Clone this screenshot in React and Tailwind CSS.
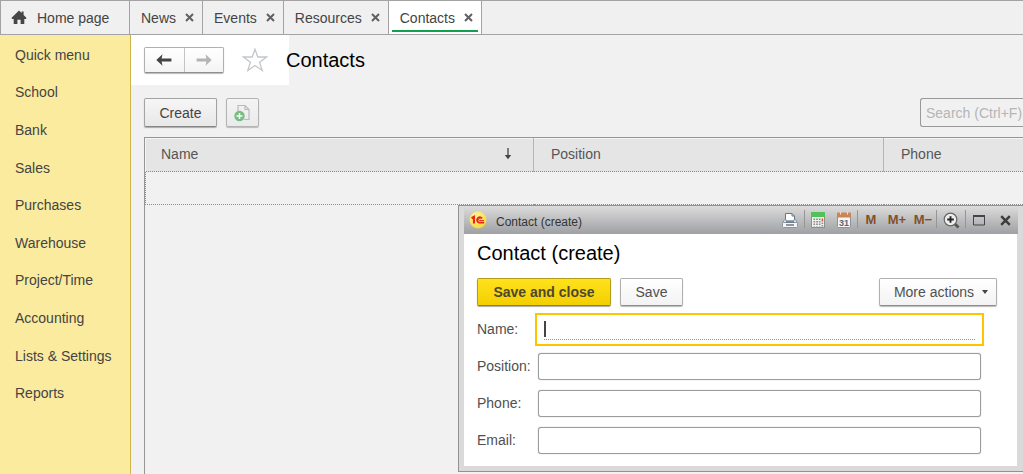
import { useState } from "react";

const tabs = ["News", "Events", "Resources", "Contacts"];

const menuItems = [
  "Quick menu",
  "School",
  "Bank",
  "Sales",
  "Purchases",
  "Warehouse",
  "Project/Time",
  "Accounting",
  "Lists & Settings",
  "Reports",
];

const CrossIcon = ({ size = 9, color = "#606060" }) => (
  <svg width={size} height={size} viewBox="0 0 9 9" fill="none">
    <path d="M1 1L8 8M8 1L1 8" stroke={color} strokeWidth="2" />
  </svg>
);

const HomeIcon = () => (
  <svg width="16" height="15" viewBox="0 0 16 15" fill="#464646">
    <path d="M8 0.5L10.6 3V1.6H12.6V5L15.6 8L14.7 9H13.3V14H9.6V9.8H6.4V14H2.7V9H1.3L0.4 8Z" />
  </svg>
);

const ArrowIcon = ({ color, flip }) => (
  <svg
    width="16"
    height="12"
    viewBox="0 0 16 12"
    className={flip ? "rotate-180" : ""}
  >
    <path d="M0.3 6L6.5 0.3L5.6 4.5H15.4V7.5H5.6L6.5 11.7Z" fill={color} />
  </svg>
);

const StarIcon = () => (
  <svg width="26" height="24" viewBox="0 0 26 24" fill="#fff">
    <path
      d="M13 1.2L15.8 9H24.6L17.6 14.2L20.2 22.5L13 17.5L5.8 22.5L8.4 14.2L1.4 9H10.2Z"
      stroke="#c2c7cd"
      strokeWidth="1.3"
    />
  </svg>
);

const AddDocIcon = () => (
  <svg width="18" height="18" viewBox="0 0 18 18" fill="none">
    <path
      d="M4 8V1.5H11L15 5.5V15.5H10M11 1.5V5.5H15"
      stroke="#b3bcc4"
      strokeWidth="1.2"
    />
    <circle cx="5.5" cy="12" r="5.2" fill="#76bd80" />
    <path d="M5.5 9V15M2.5 12H8.5" stroke="#fff" strokeWidth="1.5" />
  </svg>
);

const LogoIcon = () => (
  <svg width="18" height="18" viewBox="0 0 18 18" className="shrink-0">
    <defs>
      <radialGradient id="logo" cx="0.4" cy="0.3" r="0.7">
        <stop offset="0" stopColor="#fff9a0" />
        <stop offset="1" stopColor="#fbd83a" />
      </radialGradient>
    </defs>
    <circle cx="9" cy="9" r="8.5" fill="url(#logo)" />
    <path d="M2.6 7.2L5 5.8V12.4" stroke="#e8281a" strokeWidth="2.2" fill="none" />
    <path
      d="M13 7.4A2.7 2.7 0 1 0 10.4 11.6H15.2"
      stroke="#e8281a"
      strokeWidth="1.8"
      fill="none"
    />
    <path d="M11.4 8.3A1 1 0 1 0 10.6 9.6H15" stroke="#e8281a" strokeWidth="1" fill="none" />
  </svg>
);

const PrinterIcon = () => (
  <svg width="18" height="18" viewBox="0 0 18 18" fill="none">
    <path d="M4.5 9V2.5H11L13.5 5V9" fill="#fff" stroke="#66798c" />
    <path d="M11 2.5V5H13.5" stroke="#66798c" />
    <path d="M3.5 8.5H5V10H13V8.5H14.5L16.5 12H1.5Z" fill="#dfe5ea" stroke="#8796a3" />
    <rect x="1.5" y="11.5" width="15" height="5" rx="1" fill="#f4f6f8" stroke="#8796a3" />
    <path d="M5 11H13M5 14H13" stroke="#66798c" strokeWidth="1.4" />
  </svg>
);

const CalculatorIcon = () => (
  <svg width="16" height="18" viewBox="0 0 16 18">
    <rect x="1.5" y="1.5" width="13" height="15" fill="#f2f2ee" stroke="#8d918d" />
    <rect x="1" y="1" width="14" height="5" fill="#4fc25c" />
    <path
      d="M4.3 7.5V15.5M7 7.5V15.5M9.7 7.5V15.5"
      stroke="#858d88"
      strokeWidth="1.7"
      strokeDasharray="1.5 1"
    />
    <path d="M12.4 7.5V10.5" stroke="#e5553c" strokeWidth="1.6" />
    <path d="M12.4 11.5V15.5" stroke="#858d88" strokeWidth="1.6" strokeDasharray="1.5 1" />
  </svg>
);

const CalendarIcon = () => (
  <svg width="16" height="18" viewBox="0 0 16 18">
    <rect x="1.5" y="2.5" width="13" height="14" rx="1" fill="#f5f5f5" stroke="#8d9298" />
    <rect x="1" y="1.5" width="14" height="5" rx="1" fill="#c98555" />
    <path d="M4.5 0.5V3.5M11.5 0.5V3.5" stroke="#f1dccb" strokeWidth="1.2" />
    <text
      x="8"
      y="14.5"
      textAnchor="middle"
      fontSize="9"
      fontWeight="bold"
      fontFamily="Liberation Sans, sans-serif"
      fill="#5d646c"
    >
      31
    </text>
  </svg>
);

const ZoomIcon = () => (
  <svg width="17" height="17" viewBox="0 0 17 17" fill="none">
    <path d="M11.5 11.5L15.5 15.5" stroke="#555" strokeWidth="2.6" />
    <circle cx="7.5" cy="7.5" r="6.3" fill="#eee" stroke="#666" strokeWidth="1.2" />
    <path d="M7.5 4.2V10.8M4.2 7.5H10.8" stroke="#222" strokeWidth="1.9" />
  </svg>
);

const MaximizeIcon = () => (
  <svg width="14" height="12" viewBox="0 0 14 12" fill="none">
    <path d="M1 2H13" stroke="#444" strokeWidth="2" />
    <path d="M1.5 1V11H12.5V1" stroke="#444" />
  </svg>
);

const Separator = () => <span className="mb-[2px] h-[18px] w-px bg-[#959595]" />;

const ToolButton = ({ label, wide, children }) => (
  <button
    type="button"
    aria-label={label}
    className={`flex h-6 items-center justify-center text-[13px] font-bold text-[#855028] ${
      wide ? "w-7" : "w-[26px]"
    }`}
  >
    {children}
  </button>
);

const TabBar = ({ active, onSelect }) => (
  <header className="flex h-[35px] border-y border-[#a3a3a3] bg-[#f0f0f0]">
    <button
      type="button"
      className="flex w-[130px] items-center gap-[10px] border-x border-[#a3a3a3] pl-[10px]"
    >
      <HomeIcon />
      Home page
    </button>
    {tabs.map((tab) => (
      <div
        key={tab}
        className={`relative flex items-center gap-[9px] border-r border-[#a3a3a3] pr-2 pl-[11px] ${
          tab === active ? "bg-white" : ""
        }`}
      >
        <button type="button" onClick={() => onSelect(tab)}>
          {tab}
        </button>
        <button type="button" aria-label={`Close ${tab}`}>
          <CrossIcon />
        </button>
        {tab === active && (
          <span className="absolute inset-x-[3px] bottom-[2px] h-[2px] bg-[#12a04f]" />
        )}
      </div>
    ))}
  </header>
);

const Sidebar = () => (
  <nav className="w-[131px] shrink-0 border-r border-[#cdb44b] bg-[#fbeb9e] pt-px">
    <ul className="grid h-[376px] grid-rows-10 items-center pl-[15px]">
      {menuItems.map((item) => (
        <li key={item}>
          <a href="#">{item}</a>
        </li>
      ))}
    </ul>
  </nav>
);

const ContactsTable = () => (
  <div className="grow border-t border-l border-[#969696]">
    <table className="w-full table-fixed border-collapse text-left">
      <thead>
        <tr className="h-[33px] bg-[#e5e5e5] text-[#555]">
          <th className="w-[388px] border border-b-0 border-[#f5f5f5] border-r-[#b5b5b5] px-[15px] pb-[3px] font-normal">
            <div className="flex items-center justify-between pr-[6px]">
              Name
              <svg width="8" height="13" viewBox="0 0 8 13" fill="none">
                <path d="M4 1V11" stroke="#444" strokeWidth="1.3" />
                <path d="M0.8 8L4 12.3L7.2 8Z" fill="#444" />
              </svg>
            </div>
          </th>
          <th className="w-[350px] border border-b-0 border-[#f5f5f5] border-r-[#b5b5b5] px-[17px] pb-[3px] font-normal">
            Position
          </th>
          <th className="border border-r-0 border-b-0 border-[#f5f5f5] px-[17px] pb-[3px] font-normal">
            Phone
          </th>
        </tr>
      </thead>
      <tbody>
        <tr className="h-[33px] border-y border-l border-dotted border-[#8c8c8c]">
          <td colSpan={3} />
        </tr>
      </tbody>
    </table>
  </div>
);

const Field = ({ id, label }) => (
  <div className="flex h-[37px] items-center">
    <label htmlFor={id} className="w-[61px] shrink-0 pb-[2px]">
      {label}:
    </label>
    <input
      id={id}
      type="text"
      className="h-[27px] min-w-0 grow rounded-[3px] border border-[#9c9c9c] bg-white px-2 shadow-[0_0_1px_#999] outline-none"
    />
  </div>
);

const ContactDialog = () => (
  <section
    role="dialog"
    aria-label="Contact (create)"
    className="absolute top-[205px] right-0 w-[565px] border-y border-l border-[#929292] bg-[#dadada] pr-[6px] pb-[5px] pl-[5px]"
  >
    <div className="-mr-px flex h-7 items-center bg-linear-to-b from-[#dcdcdc] to-[#9fa0a3] pl-[5px]">
      <LogoIcon />
      <span className="ml-[9px] pt-1 text-xs text-[#333]">Contact (create)</span>
      <div className="ml-auto flex items-center">
        <ToolButton label="Print" wide>
          <PrinterIcon />
        </ToolButton>
        <Separator />
        <ToolButton label="Calculator">
          <CalculatorIcon />
        </ToolButton>
        <ToolButton label="Calendar">
          <CalendarIcon />
        </ToolButton>
        <Separator />
        <ToolButton label="Memory">M</ToolButton>
        <ToolButton label="Memory add">M+</ToolButton>
        <ToolButton label="Memory subtract">M−</ToolButton>
        <Separator />
        <ToolButton label="Zoom" wide>
          <ZoomIcon />
        </ToolButton>
        <Separator />
        <ToolButton label="Maximize">
          <MaximizeIcon />
        </ToolButton>
        <ToolButton label="Close">
          <CrossIcon size={11} color="#3c3c3c" />
        </ToolButton>
      </div>
    </div>

    <form className="bg-white pt-1 pr-5 pb-[7px] pl-[13px] text-[#505050]">
      <h2 className="text-xl leading-[30px] text-black">Contact (create)</h2>
      <div className="mt-[10px] flex h-7 gap-[9px]">
        <button
          type="button"
          className="w-[134px] rounded-xs border border-[#b39b1c] border-b-[#96820f] bg-linear-to-b from-[#ffe21a] to-[#f3cf00] font-bold text-[#4d4830] shadow-[0_1px_1px_#aaa]"
        >
          Save and close
        </button>
        <button
          type="button"
          className="w-[63px] rounded-xs border border-[#b0b0b0] border-b-[#8e8e8e] bg-linear-to-b from-white to-[#f3f3f3] shadow-[0_1px_1px_#bbb]"
        >
          Save
        </button>
        <button
          type="button"
          className="ml-auto flex w-[118px] items-center justify-center gap-2 rounded-xs border border-[#b0b0b0] border-b-[#8e8e8e] bg-linear-to-b from-white to-[#f3f3f3] pl-[6px] shadow-[0_1px_1px_#bbb]"
        >
          More actions
          <svg width="6" height="4" viewBox="0 0 6 4" fill="#444">
            <path d="M0 0H6L3 4Z" />
          </svg>
        </button>
      </div>
      <div className="mt-[5px] pr-4">
        <div className="flex h-[37px] items-center">
          <label htmlFor="name" className="w-[58px] shrink-0 pb-[2px]">
            Name:
          </label>
          <div className="relative -mr-[3px] h-[33px] grow border-2 border-[#fdc400] bg-white px-[7px]">
            <input
              id="name"
              type="text"
              className="h-[25px] w-full border-b border-dotted border-[#e57373] outline-none"
            />
            <span className="absolute top-[6px] left-[7px] h-4 w-[2px] bg-[#444]" />
          </div>
        </div>
        <Field id="position" label="Position" />
        <Field id="phone" label="Phone" />
        <Field id="email" label="Email" />
      </div>
    </form>
  </section>
);

export default function App() {
  const [active, setActive] = useState("Contacts");

  return (
    <div className="relative flex min-h-screen flex-col overflow-hidden bg-[#f1f1f1] font-['Liberation_Sans',Arial,sans-serif] text-sm text-[#444]">
      <TabBar active={active} onSelect={setActive} />
      <div className="flex grow">
        <Sidebar />
        <main className="flex min-w-0 grow flex-col">
          <div className="flex h-[50px] items-center">
            <div className="flex h-full w-[158px] items-center gap-[18px] bg-white pl-[13px]">
              <div className="flex h-[26px] w-20 rounded-xs border border-[#b0b0b0] border-b-[#8e8e8e] bg-linear-to-b from-white to-[#f4f4f4] shadow-[0_1px_1px_#bbb]">
                <button
                  type="button"
                  aria-label="Back"
                  className="flex flex-1 items-center justify-center border-r border-[#c4c4c4]"
                >
                  <ArrowIcon color="#444" />
                </button>
                <button
                  type="button"
                  aria-label="Forward"
                  className="flex flex-1 items-center justify-center"
                >
                  <ArrowIcon color="#b4b4b4" flip />
                </button>
              </div>
              <button type="button" aria-label="Add to favorites">
                <StarIcon />
              </button>
            </div>
            <h1 className="-ml-[3px] text-xl text-black">Contacts</h1>
          </div>

          <div className="mt-[13px] flex h-[29px] gap-[9px] pl-[13px]">
            <button
              type="button"
              className="w-[73px] rounded-xs border border-[#a3a3a3] border-b-[#858585] bg-linear-to-b from-[#f6f6f6] to-[#e8e8e8] shadow-[0_1px_1px_#aaa]"
            >
              Create
            </button>
            <button
              type="button"
              aria-label="Create by copying"
              className="flex w-[33px] items-center justify-center rounded-xs border border-[#b3b3b3] bg-linear-to-b from-[#f4f4f4] to-[#eaeaea] shadow-[0_1px_1px_#bbb]"
            >
              <AddDocIcon />
            </button>
            <input
              type="text"
              aria-label="Search"
              placeholder="Search (Ctrl+F)"
              className="ml-auto w-[103px] rounded-l-[3px] border border-r-0 border-[#999] pl-[5px] outline-none placeholder:text-[#b5b5b5]"
            />
          </div>

          <div className="mt-[10px] flex grow pl-[13px]">
            <ContactsTable />
          </div>
        </main>
      </div>
      <ContactDialog />
    </div>
  );
}
